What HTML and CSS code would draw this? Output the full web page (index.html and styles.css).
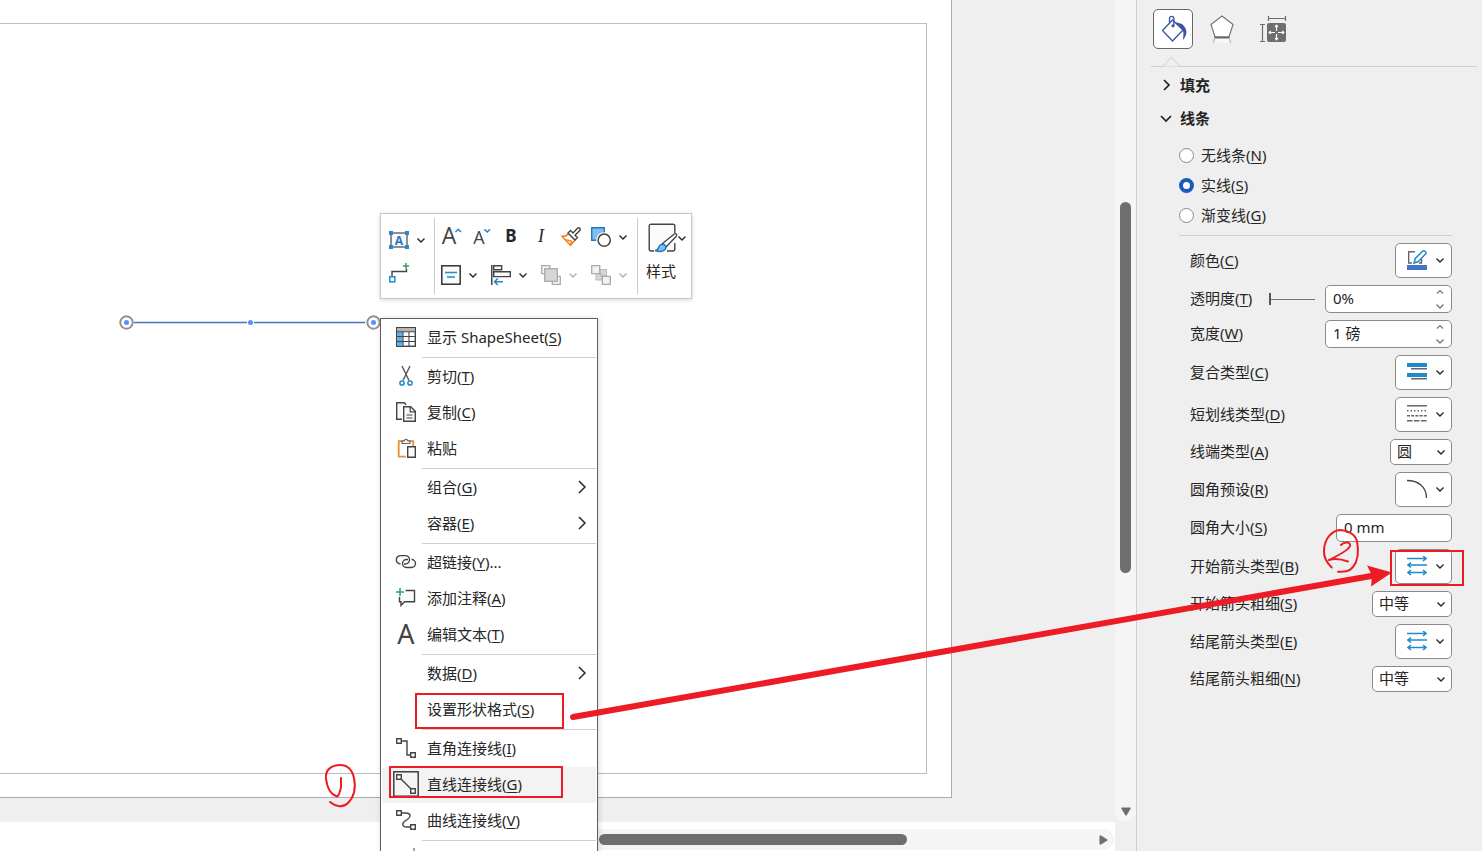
FILE: index.html
```html
<!DOCTYPE html>
<html lang="zh-CN">
<head>
<meta charset="utf-8">
<title>设置形状格式</title>
<link rel="stylesheet" href="styles.css">
</head>
<body>
<svg class="defs" aria-hidden="true">
  <symbol id="chev" viewBox="0 0 8 8"><path d="M.5 2.500L4 6l3.500-3.500" fill="none" stroke="currentColor" stroke-width="1.400"/></symbol>
  <symbol id="chev-up" viewBox="0 0 8 8"><path d="M1 5.500l3-3 3 3" fill="none" stroke="currentColor" stroke-width="1.200"/></symbol>
  <symbol id="sub" viewBox="0 0 8 14"><path d="M1 1l6 6-6 6" fill="none" stroke="currentColor" stroke-width="1.500"/></symbol>
  <symbol id="arrows" viewBox="0 0 20 20"><path d="M0 2.500h19M16 0l3 2.500L16 5M1 9h19M4 6.500L1 9l3 2.500M1 16.500h18M4 14l-3 2.500L4 19M16 14l3 2.500L16 19" fill="none" stroke="#1e8bcd" stroke-width="1.500"/></symbol>
</svg>
<div class="app">
  <main class="workspace">
    <div class="canvas">
      <div class="page"><div class="page-frame"></div></div>
    </div>
    <div class="vscroll"><span class="vthumb"></span>
      <svg class="vdown" viewBox="0 0 10 9"><path d="M1 .5h8a.8.8 0 0 1 .7 1L5.800 8a1 1 0 0 1-1.600 0L.3 1.500A.8.8 0 0 1 1 .5z" fill="#6e6e6e"/></svg>
    </div>
    <div class="hscroll"><div class="htrack"><span class="hthumb"></span>
      <svg class="hright" viewBox="0 0 9 10"><path d="M.5 1v8a.8.8 0 0 0 1 .7L8 5.800a1 1 0 0 0 0-1.600L1.500.3A.8.8 0 0 0 .5 1z" fill="#6e6e6e"/></svg>
    </div></div>
    <div class="corner"></div>

    <svg class="connector" viewBox="0 0 264 18" aria-hidden="true">
      <path d="M17 9.500h231" stroke="#4472c4" stroke-width="1.500"/>
      <circle cx="9.500" cy="9.500" r="6.200" fill="#fff" stroke="#919191" stroke-width="2"/><circle cx="9.500" cy="9.500" r="2.500" fill="#5b8ff9"/>
      <circle cx="133.500" cy="9.500" r="3.500" fill="#fff"/><circle cx="133.500" cy="9.500" r="2.500" fill="#5b8ff9"/>
      <circle cx="256.500" cy="9.500" r="6.200" fill="#fff" stroke="#919191" stroke-width="2"/><circle cx="256.500" cy="9.500" r="2.500" fill="#5b8ff9"/>
    </svg>

    <div class="minibar" role="toolbar" aria-label="格式">
      <div class="bar-left">
        <div class="split">
          <button class="tool" aria-label="文本块"><svg width="20" height="20" viewBox="0 0 20 20"><rect x="2" y="3" width="16" height="14" fill="#fafafa" stroke="#555" stroke-width="1.300"/><path d="M0 1h4v4H0zM16 1h4v4h-4zM0 15h4v4H0zM16 15h4v4h-4z" fill="#2b88d0"/><text x="10" y="14.500" text-anchor="middle" class="t-block">A</text></svg></button>
          <button class="drop" aria-label="更多"><svg><use href="#chev"/></svg></button>
        </div>
        <button class="tool" aria-label="连接线"><svg width="20" height="20" viewBox="0 0 20 20"><rect x=".8" y="13.800" width="5" height="5" fill="#fff" stroke="#1e8bcd" stroke-width="1.500"/><path d="M3 13V8.500h14.500V6" fill="none" stroke="#444" stroke-width="1.400"/><path d="M17 0v6M14 3h6" stroke="#33a34d" stroke-width="1.500"/></svg></button>
      </div>
      <div class="bar-mid">
        <div class="bar-row">
          <button class="tool" aria-label="增大字号"><svg width="20" height="20" viewBox="0 0 20 20"><text x="8" y="17" text-anchor="middle" class="t-big">A</text><path d="M14.500 5l2.700-2.700L20 5" fill="none" stroke="#1e8bcd" stroke-width="1.600"/></svg></button>
          <button class="tool" aria-label="减小字号"><svg width="20" height="20" viewBox="0 0 20 20"><text x="8" y="17" text-anchor="middle" class="t-mid">A</text><path d="M13.500 2.300L16.300 5 19 2.300" fill="none" stroke="#1e8bcd" stroke-width="1.600"/></svg></button>
          <button class="tool bold" aria-label="加粗">B</button>
          <button class="tool italic" aria-label="倾斜">I</button>
          <button class="tool" aria-label="格式刷"><svg width="20" height="20" viewBox="0 0 20 20"><path d="M1 9.500c3 .3 5-1 6.500-3l6.500 6.500-4.500 5.500z" fill="#fff" stroke="#e87b1c" stroke-width="1.400"/><path d="M4 12.500l7 1.500-2 4z" fill="#f7c78c" stroke="#e87b1c"/><path d="M7 6l2.500-2.500L12 6l4.500-4.700a1.600 1.600 0 0 1 2.300 2.300L14 8.200l2.500 2.300L14 13z" fill="#fff" stroke="#444" stroke-width="1.400"/></svg></button>
          <div class="split">
            <button class="tool" aria-label="形状"><svg width="20" height="20" viewBox="0 0 20 20"><path d="M.7.7h12.600v12.600H.7z" fill="#83bdf0" stroke="#1e78c0" stroke-width="1.400"/><circle cx="13.200" cy="13.200" r="8" fill="#fff"/><circle cx="13.200" cy="13.200" r="6.100" fill="#fff" stroke="#444" stroke-width="1.500"/></svg></button>
            <button class="drop" aria-label="更多"><svg><use href="#chev"/></svg></button>
          </div>
        </div>
        <div class="bar-row">
          <div class="split">
            <button class="tool" aria-label="对齐文本"><svg width="20" height="20" viewBox="0 0 20 20"><rect x=".8" y=".8" width="18.400" height="18.400" fill="#fafafa" stroke="#333" stroke-width="1.500"/><path d="M4 7.500h12M6 12h8" stroke="#1e8bcd" stroke-width="1.500"/></svg></button>
            <button class="drop" aria-label="更多"><svg><use href="#chev"/></svg></button>
          </div>
          <div class="split">
            <button class="tool" aria-label="排列"><svg width="20" height="20" viewBox="0 0 20 20"><path d="M.8 0v20" stroke="#444" stroke-width="1.500"/><path d="M2.700.8h8v4h-8zM2.700 6.800h16.600v4.800H2.700z" fill="#fafafa" stroke="#444" stroke-width="1.400"/><path d="M3.500 16.800H12M6.800 13.500l-3.300 3.300L6.800 20" fill="none" stroke="#1e8bcd" stroke-width="1.500"/></svg></button>
            <button class="drop" aria-label="更多"><svg><use href="#chev"/></svg></button>
          </div>
          <div class="split off">
            <button class="tool" disabled aria-label="置于顶层"><svg width="20" height="20" viewBox="0 0 20 20"><path d="M.7.7h8v8h-8zM11.300 11.300h8v8h-8z" fill="#f6f6f6" stroke="#aaa" stroke-width="1.300"/><rect x="3.700" y="3.700" width="12.600" height="12.600" fill="#d6d6d6" stroke="#aaa" stroke-width="1.300"/></svg></button>
            <button class="drop" disabled aria-label="更多"><svg><use href="#chev"/></svg></button>
          </div>
          <div class="split off">
            <button class="tool" disabled aria-label="组合"><svg width="20" height="20" viewBox="0 0 20 20"><path d="M9 4.500h6.500V11h-6zM5 8.500V15h6V9z" fill="#d6d6d6" stroke="#bbb"/><path d="M.7.7h8v8h-8zM11.300 11.300h8v8h-8z" fill="#f2f2f2" stroke="#aaa" stroke-width="1.300"/></svg></button>
            <button class="drop" disabled aria-label="更多"><svg><use href="#chev"/></svg></button>
          </div>
        </div>
      </div>
      <button class="style-btn">
        <span class="style-icon"><svg width="30" height="30" viewBox="0 0 30 30"><path d="M6 28H3a1.800 1.800 0 0 1-1.800-1.800V3A1.800 1.800 0 0 1 3 1.200h22A1.800 1.800 0 0 1 26.800 3v7M26.800 20v6a2 2 0 0 1-2 2H19" fill="#fafafa" stroke="#444" stroke-width="1.400"/><path d="M2 2h24v9L15 22l-4 5H2z" fill="#fafafa"/><path d="M14.500 20.500L26.300 11a1.500 1.500 0 0 1 2.200 2L18 24z" fill="#fff" stroke="#444" stroke-width="1.300"/><path d="M7 27.500c3 0 3-1.500 4-4 1.500-3 5.500-3 6.500-.5 1.500 4-3.500 7-10.500 4.500z" fill="#83bdf0" stroke="#1e78c0" stroke-width="1.400"/></svg>
        <svg class="chev"><use href="#chev"/></svg></span>
        <span>样式</span>
      </button>
    </div>

    <div class="menu" role="menu">
      <button class="item" role="menuitem"><span class="ico"><svg width="20" height="20" viewBox="0 0 20 20"><rect x=".7" y=".7" width="18.600" height="18.600" fill="#fff" stroke="#444" stroke-width="1.400"/><path d="M1 1h18v3.500H1z" fill="#b5b5b5"/><path d="M1.400 5h5.200v14H1.400z" fill="#5cb0ee"/><path d="M0 4.700h20M1 9.500h18M1 14.500h18M7 5v15M13 5v15" stroke="#444" stroke-width="1.100"/></svg></span><span>显示 ShapeSheet(<u>S</u>)</span></button>
      <hr>
      <button class="item" role="menuitem"><span class="ico"><svg width="20" height="20" viewBox="0 0 20 20"><path d="M6 0l7 14.500M14 0L7 14.500" stroke="#555" stroke-width="1.400"/><circle cx="6" cy="17" r="2.100" fill="none" stroke="#1e8bcd" stroke-width="1.500"/><circle cx="14" cy="17" r="2.100" fill="none" stroke="#1e8bcd" stroke-width="1.500"/></svg></span><span>剪切(<u>T</u>)</span></button>
      <button class="item" role="menuitem"><span class="ico"><svg width="20" height="20" viewBox="0 0 20 20"><path d="M6 17.300H.7V.7h7.500l2 2" fill="#fafafa" stroke="#444" stroke-width="1.400"/><path d="M7.700 4.700h7l4.600 4.600v9.900H7.700z" fill="#fafafa" stroke="#444" stroke-width="1.400"/><path d="M14.200 5v4.800H19M10.500 13h6M10.500 16h6" fill="none" stroke="#444" stroke-width="1.200"/></svg></span><span>复制(<u>C</u>)</span></button>
      <button class="item" role="menuitem"><span class="ico"><svg width="20" height="20" viewBox="0 0 20 20"><path d="M10 18.700H2.700V3.200h14.500V8" fill="none" stroke="#e8912d" stroke-width="1.800"/><path d="M6 5.500V2.800h2.200a1.900 1.900 0 0 1 3.700 0H14v2.700z" fill="#fafafa" stroke="#666" stroke-width="1.200"/><path d="M11.700 8.700h7.600v10.500h-7.600z" fill="#fafafa" stroke="#444" stroke-width="1.400"/></svg></span><span>粘贴</span></button>
      <hr>
      <button class="item" role="menuitem"><span class="ico"></span><span>组合(<u>G</u>)</span><svg class="sub"><use href="#sub"/></svg></button>
      <button class="item" role="menuitem"><span class="ico"></span><span>容器(<u>E</u>)</span><svg class="sub"><use href="#sub"/></svg></button>
      <hr>
      <button class="item" role="menuitem"><span class="ico"><svg width="20" height="20" viewBox="0 0 20 20"><path d="M4.500 12a4.200 4.200 0 0 1 0-8.400h4.800a4.200 4.200 0 0 1 0 8.400H8M15.500 7.500a4 4 0 0 1 0 8h-5a4 4 0 0 1 0-8h1.500" fill="none" stroke="#444" stroke-width="1.400"/></svg></span><span>超链接(<u>Y</u>)...</span></button>
      <button class="item" role="menuitem"><span class="ico"><svg width="20" height="20" viewBox="0 0 20 20"><path d="M9.500 2.500h9v11.300H8.500L5 17.500v-3.700H3.500V9" fill="#fafafa" stroke="#444" stroke-width="1.400"/><path d="M4 0v8M0 4h8" stroke="#33a34d" stroke-width="1.500"/></svg></span><span>添加注释(<u>A</u>)</span></button>
      <button class="item" role="menuitem"><span class="ico letter">A</span><span>编辑文本(<u>T</u>)</span></button>
      <hr>
      <button class="item" role="menuitem"><span class="ico"></span><span>数据(<u>D</u>)</span><svg class="sub"><use href="#sub"/></svg></button>
      <button class="item" role="menuitem"><span class="ico"></span><span>设置形状格式(<u>S</u>)</span></button>
      <hr>
      <button class="item" role="menuitem"><span class="ico"><svg width="20" height="20" viewBox="0 0 20 20"><path d="M6 3h5v14h3" fill="none" stroke="#444" stroke-width="1.400"/><path d="M.7.7h4.600v4.600H.7zM14.700 14.700h4.600v4.600h-4.600z" fill="#fff" stroke="#444" stroke-width="1.400"/></svg></span><span>直角连接线(<u>I</u>)</span></button>
      <button class="item current" role="menuitem"><span class="ico"><svg width="26" height="26" viewBox="-3 -3 26 26"><rect x="-2.200" y="-2.200" width="24.400" height="24.400" fill="#f5f5f5" stroke="#333" stroke-width="1.400"/><path d="M5 5l10 10" stroke="#444" stroke-width="1.400"/><path d="M.7.7h4.600v4.600H.7zM14.700 14.700h4.600v4.600h-4.600z" fill="#fff" stroke="#444" stroke-width="1.400"/></svg></span><span>直线连接线(<u>G</u>)</span></button>
      <button class="item" role="menuitem"><span class="ico"><svg width="20" height="20" viewBox="0 0 20 20"><path d="M6 3h4c5 0 5 4 2 6l-3 2c-4 3-2 6 1 6h4" fill="none" stroke="#444" stroke-width="1.400"/><path d="M.7.7h4.600v4.600H.7zM14.700 14.700h4.600v4.600h-4.600z" fill="#fff" stroke="#444" stroke-width="1.400"/></svg></span><span>曲线连接线(<u>V</u>)</span></button>
      <hr>
      <button class="item" role="menuitem" aria-label="选择连接线"><span class="ico"><svg width="20" height="22" viewBox="0 0 20 22"><path d="M18 0v16" stroke="#777" stroke-width="1.400"/></svg></span></button>
    </div>
  </main>

  <aside class="panel">
    <div class="tabs">
      <button class="tab active" aria-label="填充与线条"><svg width="28" height="28" viewBox="0 0 28 28"><path d="M13.500 5L3.500 15.500 13.500 26 24 15z" fill="#fff" stroke="#3955a3" stroke-width="1.300"/><path d="M10.500 8V3.500a2.200 2.200 0 0 1 4.400 0V10" fill="none" stroke="#3955a3" stroke-width="1.300"/><circle cx="14" cy="10.800" r="1.600" fill="#3955a3"/><path d="M16 7l7 2c6 5 5.500 11 1 16 .5-5 1-8-1-11z" fill="#3955a3"/></svg></button>
      <button class="tab" aria-label="效果"><svg width="28" height="30" viewBox="1 0 28 30"><path d="M14 2l11 8.500L21 23H7L3 10.500z" fill="#fff" stroke="#767676" stroke-width="1.200"/><path d="M7 24h14l1.500 4.500h-17z" fill="#f8f8f8"/><path d="M6.500 23.500h15" stroke="#666" stroke-width="2"/><path d="M6.500 25L5.500 29M21.500 25l1 4" stroke="#aaa"/></svg></button>
      <button class="tab" aria-label="大小与属性"><svg width="28" height="28" viewBox="0 -1 28 28"><path d="M9.500 2.500h17M9.500 0v5M26.500 0v5M3.500 9v16.500M1 8.500h5M1 25.500h5" stroke="#6e6e6e" stroke-width="1.200"/><rect x="8" y="7" width="19" height="19" rx="2" fill="#6e6e6e"/><path d="M17.500 9v6M17.500 18v6M10 16.500h6M19 16.500h6M16 10.800l1.500-1.600 1.500 1.600M16 22.200l1.500 1.600 1.500-1.600M11.800 15l-1.600 1.500 1.600 1.500M23.200 15l1.600 1.500-1.600 1.500" fill="none" stroke="#fff" stroke-width="1.200"/></svg></button>
    </div>
    <div class="tab-rule"><svg width="28" height="11" viewBox="0 0 28 11"><path d="M0 10.500h6l8.500-9.500 8.500 9.500h5" fill="#efefef" stroke="#cfcfcf"/></svg></div>

    <button class="section"><svg width="12" height="12" viewBox="0 0 12 12"><path d="M4 1l5 5-5 5" fill="none" stroke="#222" stroke-width="1.700"/></svg>填充</button>
    <button class="section"><svg width="12" height="12" viewBox="0 0 12 12"><path d="M1 4l5 5 5-5" fill="none" stroke="#222" stroke-width="1.700"/></svg>线条</button>

    <div class="radios">
      <label><input type="radio" name="line"><span>无线条(<u>N</u>)</span></label>
      <label><input type="radio" name="line" checked><span>实线(<u>S</u>)</span></label>
      <label><input type="radio" name="line"><span>渐变线(<u>G</u>)</span></label>
    </div>

    <div class="fields">
      <div class="field"><label for="color">颜色(<u>C</u>)</label>
        <button class="pick" id="color"><svg width="20" height="20" viewBox="0 0 20 20"><path d="M8 1.700H1.700V13H5M14.500 8v5H12" fill="none" stroke="#666" stroke-width="1.400"/><path d="M7 13l1.300-4.500L15.500 1.300a1.600 1.600 0 0 1 2.500 0l.5.500a1.600 1.600 0 0 1 0 2.300L11.300 11.500z" fill="#fff" stroke="#1e8bcd" stroke-width="1.500"/><path d="M0 15h20v5H0z" fill="#4472c4"/></svg><svg class="chev"><use href="#chev"/></svg></button></div>
      <div class="field"><label for="alpha">透明度(<u>T</u>)</label>
        <input class="slider" type="range" min="0" max="100" value="0" aria-label="透明度">
        <div class="spin push"><input id="alpha" type="text" value="0%"><span class="steps"><button aria-label="增加"><svg><use href="#chev-up"/></svg></button><button aria-label="减少"><svg><use href="#chev"/></svg></button></span></div></div>
      <div class="field"><label for="width">宽度(<u>W</u>)</label>
        <div class="spin push"><input id="width" type="text" value="1 磅"><span class="steps"><button aria-label="增加"><svg><use href="#chev-up"/></svg></button><button aria-label="减少"><svg><use href="#chev"/></svg></button></span></div></div>
      <div class="field"><label for="compound">复合类型(<u>C</u>)</label>
        <button class="pick" id="compound"><svg width="20" height="20" viewBox="0 0 20 20"><path d="M0 1h20v4H0zM0 11h20v4H0z" fill="#1e8bcd"/><path d="M4 6.800h16M4 16.800h16" stroke="#666" stroke-width="1.500"/></svg><svg class="chev"><use href="#chev"/></svg></button></div>
      <div class="field"><label for="dash">短划线类型(<u>D</u>)</label>
        <button class="pick" id="dash"><svg width="20" height="20" viewBox="0 0 20 20" fill="none" stroke="#666" stroke-width="1.500"><path d="M0 1.800h20"/><path d="M0 6.800h20" stroke-dasharray="1.500 2"/><path d="M0 11.800h20" stroke-dasharray="3 1.200"/><path d="M0 16.800h20" stroke-dasharray="5.500 1.500"/></svg><svg class="chev"><use href="#chev"/></svg></button></div>
      <div class="field"><label for="cap">线端类型(<u>A</u>)</label>
        <span class="sel short"><select id="cap"><option>圆</option></select><svg class="chev"><use href="#chev"/></svg></span></div>
      <div class="field"><label for="preset">圆角预设(<u>R</u>)</label>
        <button class="pick" id="preset"><svg width="20" height="20" viewBox="0 0 20 20"><path d="M0 1.500c11 0 19.500 6 19.500 17.500" fill="none" stroke="#444" stroke-width="1.300"/></svg><svg class="chev"><use href="#chev"/></svg></button></div>
      <div class="field"><label for="round">圆角大小(<u>S</u>)</label>
        <div class="spin plain"><input id="round" type="text" value="0 mm"></div></div>
      <div class="field"><label for="begin">开始箭头类型(<u>B</u>)</label>
        <button class="pick" id="begin"><svg width="20" height="20"><use href="#arrows"/></svg><svg class="chev"><use href="#chev"/></svg></button></div>
      <div class="field"><label for="beginsize">开始箭头粗细(<u>S</u>)</label>
        <span class="sel"><select id="beginsize"><option>中等</option></select><svg class="chev"><use href="#chev"/></svg></span></div>
      <div class="field"><label for="end">结尾箭头类型(<u>E</u>)</label>
        <button class="pick" id="end"><svg width="20" height="20"><use href="#arrows"/></svg><svg class="chev"><use href="#chev"/></svg></button></div>
      <div class="field"><label for="endsize">结尾箭头粗细(<u>N</u>)</label>
        <span class="sel"><select id="endsize"><option>中等</option></select><svg class="chev"><use href="#chev"/></svg></span></div>
    </div>
  </aside>

  <svg class="marks" aria-hidden="true">
    <g fill="none" stroke="#ed1c24" stroke-width="2" stroke-linecap="round" stroke-linejoin="round">
      <path d="M341 778v9c-1 5-2 9-4 9.500-6-2-10-9-11-18-1-9 6-13.500 14-13.500 7 0 12 4 14 13 2 10 0 19-6 25-5 5-12 4-18-1"/>
      <path d="M1331.700 567.500c-4-4-8-10-7.700-16 0-14 9-21 16-21.500 7 0 15 4 17 11 2 11 1 20-4 26-4 5-9 5-15 4.700"/>
      <path d="M1341 545c4-4 10-3 9 1-2 5-13 10-21 14 6-2 12-1 19 1.500"/>
    </g>
    <g fill="none" stroke="#ed1c24" stroke-width="2">
      <path d="M416 694h147v34H416zM390 767h172v30H390zM1391 551h72v34h-72z"/>
    </g>
    <path d="M573 717L1374 575.500" stroke="#ed1c24" stroke-width="6" stroke-linecap="round"/>
    <path d="M1392 572.500l-25-7 5 10-1 11z" fill="#ed1c24"/>
  </svg>
</div>
</body>
</html>
```
FILE: styles.css
```css
* { box-sizing: border-box; }
body {
  margin: 0;
  font: 15px/20px "Noto Sans", "Noto Sans CJK SC", sans-serif;
  color: #262626;
  background: #efefef;
}
button, input, select { font: inherit; color: inherit; margin: 0; }
button { padding: 0; border: 0; background: none; text-align: left; }
svg { display: block; flex: none; overflow: visible; }
u { text-underline-offset: 2px; text-decoration-thickness: 1px; }
.defs { position: absolute; width: 0; height: 0; }
.app { position: relative; display: flex; height: 100vh; overflow: hidden; }

.workspace {
  position: relative;
  flex: 1;
  min-width: 0;
  display: grid;
  grid-template-columns: 1fr 21px;
  grid-template-rows: 1fr 29px;
}
.canvas { display: flex; padding: 0 163px 24px 0; background: #efefef; }
.page {
  flex: 1;
  display: flex;
  padding: 23px 24px 23px 0;
  background: #fff;
  border: solid #a9abae;
  border-width: 0 1px 1px 0;
}
.page-frame { flex: 1; border: solid #bdbdbd; border-width: 1px 1px 1px 0; }
.vscroll {
  display: flex;
  flex-direction: column;
  align-items: center;
  justify-content: space-between;
  padding: 202px 0 6px;
  background: #f5f5f5;
  border-radius: 0 0 10px 10px;
}
.vthumb { width: 11px; height: 60.5%; border-radius: 6px; background: #6e6e6e; }
.vdown { width: 10px; height: 9px; }
.hscroll { display: flex; padding: 7px 1px 1px 580px; background: #fff; }
.htrack {
  flex: 1;
  display: flex;
  align-items: center;
  justify-content: space-between;
  padding: 0 6px 0 19px;
  background: #f5f5f5;
  border-radius: 10px;
}
.hthumb { width: 308px; height: 11px; border-radius: 6px; background: #6e6e6e; }
.hright { width: 9px; height: 10px; }
.corner { background: #efefef; }

.connector { position: absolute; left: 117px; top: 313px; width: 264px; height: 18px; }

.minibar {
  position: absolute;
  left: 380px;
  top: 213px;
  display: flex;
  padding: 4px 0 4px 3px;
  background: #fff;
  border: 1px solid #c8c8c8;
  box-shadow: 0 1px 4px rgba(0, 0, 0, .18);
}
.bar-left {
  display: flex;
  flex-direction: column;
  justify-content: center;
  width: 51px;
  border-right: 1px solid #c8c8c8;
}
.bar-left .tool { height: 33px; }
.bar-mid { width: 203px; padding-left: 1px; border-right: 1px solid #c8c8c8; }
.bar-row { display: flex; height: 38px; align-items: center; }
.split { display: flex; align-items: center; }
.bar-mid .split { width: 50px; }
.tool { display: flex; align-items: center; justify-content: center; width: 30px; height: 30px; }
.drop { display: flex; align-items: center; justify-content: center; width: 14px; height: 30px; }
.drop svg, .chev { width: 8px; height: 8px; color: #262626; }
.off .drop svg { color: #b0b0b0; }
.bold { padding-bottom: 2px; font-weight: 700; font-size: 17px; }
.italic { padding-bottom: 2px; font-family: "Liberation Serif", serif; font-style: italic; font-size: 18px; }
.t-block { font: 700 12px "Open Sans", sans-serif; fill: #1e78c0; }
.t-big { font: 23px "Open Sans", sans-serif; fill: #444; }
.t-mid { font: 18px "Open Sans", sans-serif; fill: #444; }
.style-btn {
  display: flex;
  flex-direction: column;
  gap: 8px;
  width: 53px;
  padding: 5px 0 0 8px;
}
.style-icon { display: flex; align-items: center; padding-left: 2px; }

.menu {
  position: absolute;
  left: 380px;
  top: 318px;
  width: 218px;
  padding: 1px;
  background: #fff;
  border: 1px solid #5f5f5f;
  box-shadow: 1px 1px 6px rgba(0, 0, 0, .15);
}
.menu hr { height: 1px; margin: 1px 0 1px 40px; border: 0; background: #cfcfcf; }
.item {
  display: flex;
  align-items: center;
  gap: 11px;
  width: 100%;
  height: 36px;
  padding: 0 10px 2px 14px;
}
.item.current { background: #f3f3f3; }
.ico { display: flex; align-items: center; justify-content: center; width: 20px; height: 24px; }
.letter { font-size: 27px; color: #444; }
.sub { width: 8px; height: 14px; margin-left: auto; }

.panel {
  flex: none;
  width: 346px;
  padding: 9px 5px 0 14px;
  background: #efefef;
  border-left: 1px solid #cfcfcf;
}
.tabs { display: flex; gap: 10px; padding-left: 2px; }
.tab { display: flex; align-items: center; justify-content: center; width: 40px; height: 40px; }
.tab.active { background: #fff; border: 1px solid #666; border-radius: 5px; }
.tab-rule { height: 18px; margin-bottom: 1px; padding: 7px 0 0 6px; border-bottom: 1px solid #cfcfcf; }
.section {
  display: flex;
  align-items: center;
  gap: 8px;
  width: 100%;
  height: 33px;
  padding-left: 9px;
  font-weight: 700;
}
.radios {
  margin: 6px 25px 7px 28px;
  padding-bottom: 5px;
  border-bottom: 1px solid #cfcfcf;
}
.radios label { display: flex; align-items: center; gap: 7px; height: 30px; }
.radios input {
  appearance: none;
  width: 15px;
  height: 15px;
  background: #fff;
  border: 1px solid #8a8a8a;
  border-radius: 50%;
}
.radios input:checked { border: 4px solid #185abd; }
.fields { display: flex; flex-direction: column; gap: 7px; padding: 0 25px 0 39px; }
.field { display: flex; align-items: center; justify-content: space-between; }
.field label { padding-bottom: 2px; }
.pick {
  display: flex;
  align-items: center;
  justify-content: space-between;
  width: 57px;
  height: 35px;
  padding: 0 7px 2px 11px;
}
.pick, .spin, .sel select { background: #fff; border: 1px solid #8a8a8a; border-radius: 5px; }
.spin { display: flex; width: 127px; height: 28px; padding: 0 7px; }
.spin.plain { width: 116px; }
.spin input { flex: 1; min-width: 0; width: 0; padding: 0 0 2px; border: 0; background: none; }
.steps { display: flex; flex-direction: column; justify-content: space-between; padding: 2px 0; }
.steps svg { width: 8px; height: 8px; color: #777; }
.slider { appearance: none; width: 46px; height: 12px; margin: 0 10px 0 auto; background: linear-gradient(#777, #777) center / 100% 1px no-repeat; }
.slider + .spin { flex: none; }
.slider::-webkit-slider-thumb { appearance: none; width: 2px; height: 12px; background: #555; }
.sel { position: relative; width: 80px; }
.sel.short { width: 62px; }
.sel select { display: block; appearance: none; width: 100%; height: 26px; padding: 0 6px 2px; }
.sel .chev { position: absolute; right: 7px; top: 9px; pointer-events: none; }

.marks { position: absolute; inset: 0; width: 100%; height: 100%; pointer-events: none; }
```
